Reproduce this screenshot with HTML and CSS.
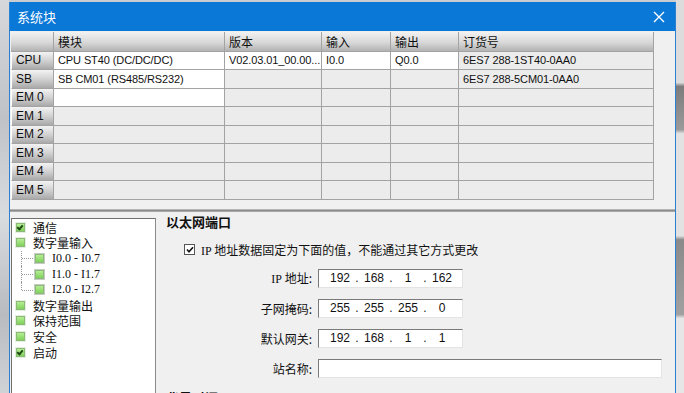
FILE: index.html
```html
<!DOCTYPE html>
<html lang="zh">
<head>
    <meta charset="UTF-8">
    <meta name="viewport" content="width=device-width, initial-scale=1.0">
    <title>系统块</title>
    <link rel="stylesheet" href="styles.css">
</head>
<body>
    <div class="screen">
        <div class="edge edge-left"></div>
        <div class="dialog">
            <div class="titlebar">
                <span>系统块</span>
                <svg class="close" width="12" height="12" viewBox="0 0 12 12"><path d="M1 1 L11 11 M11 1 L1 11" stroke="#fff" stroke-width="1.4" fill="none"/></svg>
            </div>

            <div class="grid-area">
                <div class="module-grid">
                    <div class="hd"></div>
                    <div class="hd">模块</div>
                    <div class="hd">版本</div>
                    <div class="hd">输入</div>
                    <div class="hd">输出</div>
                    <div class="hd">订货号</div>

                    <div class="lbl">CPU</div>
                    <div class="cell on">CPU ST40 (DC/DC/DC)</div>
                    <div class="cell on">V02.03.01_00.00...</div>
                    <div class="cell on">I0.0</div>
                    <div class="cell on">Q0.0</div>
                    <div class="cell">6ES7 288-1ST40-0AA0</div>

                    <div class="lbl">SB</div>
                    <div class="cell on">SB CM01 (RS485/RS232)</div>
                    <div class="cell"></div>
                    <div class="cell"></div>
                    <div class="cell"></div>
                    <div class="cell">6ES7 288-5CM01-0AA0</div>

                    <div class="lbl">EM 0</div>
                    <div class="cell on"></div>
                    <div class="cell"></div>
                    <div class="cell"></div>
                    <div class="cell"></div>
                    <div class="cell"></div>

                    <div class="lbl">EM 1</div>
                    <div class="cell"></div><div class="cell"></div><div class="cell"></div><div class="cell"></div><div class="cell"></div>
                    <div class="lbl">EM 2</div>
                    <div class="cell"></div><div class="cell"></div><div class="cell"></div><div class="cell"></div><div class="cell"></div>
                    <div class="lbl">EM 3</div>
                    <div class="cell"></div><div class="cell"></div><div class="cell"></div><div class="cell"></div><div class="cell"></div>
                    <div class="lbl">EM 4</div>
                    <div class="cell"></div><div class="cell"></div><div class="cell"></div><div class="cell"></div><div class="cell"></div>
                    <div class="lbl">EM 5</div>
                    <div class="cell"></div><div class="cell"></div><div class="cell"></div><div class="cell"></div><div class="cell"></div>
                </div>
            </div>

            <div class="splitter"></div>

            <div class="lower">
                <div class="tree">
                    <div class="node"><span class="box checked"></span>通信</div>
                    <div class="node"><span class="box"></span>数字量输入</div>
                    <div class="branch">
                        <div class="node sub"><span class="box"></span>I0.0 - I0.7</div>
                        <div class="node sub"><span class="box"></span>I1.0 - I1.7</div>
                        <div class="node sub last"><span class="box"></span>I2.0 - I2.7</div>
                    </div>
                    <div class="node"><span class="box"></span>数字量输出</div>
                    <div class="node"><span class="box"></span>保持范围</div>
                    <div class="node"><span class="box"></span>安全</div>
                    <div class="node"><span class="box checked"></span>启动</div>
                </div>

                <div class="props">
                    <div class="section">以太网端口</div>
                    <label class="fixed">
                        <span class="chk">
                            <svg width="8" height="8" viewBox="0 0 8 8"><path d="M1 3.5 L3 5.8 L7 1.2" stroke="#111" stroke-width="1.6" fill="none"/></svg>
                        </span>
                        <span><span class="latin">IP</span> 地址数据固定为下面的值，不能通过其它方式更改</span>
                    </label>

                    <div class="form">
                        <div class="name"><span class="latin">IP</span> 地址:</div>
                        <div class="ipbox">
                            <span class="oct">192</span><span class="dot">.</span><span class="oct">168</span><span class="dot">.</span><span class="oct">1</span><span class="dot">.</span><span class="oct">162</span>
                        </div>

                        <div class="name">子网掩码:</div>
                        <div class="ipbox">
                            <span class="oct">255</span><span class="dot">.</span><span class="oct">255</span><span class="dot">.</span><span class="oct">255</span><span class="dot">.</span><span class="oct">0</span>
                        </div>

                        <div class="name">默认网关:</div>
                        <div class="ipbox">
                            <span class="oct">192</span><span class="dot">.</span><span class="oct">168</span><span class="dot">.</span><span class="oct">1</span><span class="dot">.</span><span class="oct">1</span>
                        </div>

                        <div class="name">站名称:</div>
                        <div class="ipbox wide"></div>
                    </div>

                    <div class="section next">背景时间</div>
                </div>
            </div>
        </div>
        <div class="edge edge-right"></div>
    </div>
</body>
</html>
```

FILE: styles.css
```css
body {
    margin: 0;
    padding: 0;
    background: #c9ccd0;
    font-family: "Noto Sans CJK SC", "Liberation Sans", sans-serif;
    font-size: 12px;
    color: #111;
    overflow: hidden;
}

.screen {
    display: flex;
    width: 684px;
    height: 393px;
    overflow: hidden;
}

.edge-left {
    width: 9px;
    background: linear-gradient(#d6d8db, #bfc3c8 30%, #d9dcdf 55%, #b8bcc1 80%, #d0d3d6);
}
.edge-right {
    width: 8px;
    background: linear-gradient(#dcdcdc 0, #dcdcdc 21%, #7c7c7c 22%, #9a9a9a 33%, #e2e2e2 34%, #e2e2e2 60%, #8a8a8a 61%, #a0a0a0 80%, #e6e6e6 81%);
}

/* Dialog */
.dialog {
    width: 665px;
    margin-top: 2px;
    background: #f0f0f0;
    border-left: 1px solid #2b80d4;
    border-right: 1px solid #2b80d4;
    display: flex;
    flex-direction: column;
}

.titlebar {
    height: 29px;
    background: #0a78d7;
    color: #fff;
    font-size: 13px;
    display: flex;
    align-items: center;
    justify-content: space-between;
    padding: 0 10px 0 7px;
    flex-shrink: 0;
}
.titlebar span {
    margin-top: -1px;
}

/* Module table */
.grid-area {
    padding: 1px 0 0 1px;
}
.module-grid {
    display: grid;
    width: 643px;
    grid-template-columns: 43px 171px 97px 69px 68px 195px;
    grid-template-rows: 19.5px repeat(8, 18.5px);
    font-family: "Liberation Sans", "Noto Sans CJK SC", sans-serif;
    font-size: 11px;
}
.module-grid > div {
    box-sizing: border-box;
    border-right: 1px solid #a3a3a3;
    border-bottom: 1px solid #a3a3a3;
    padding-left: 4px;
    display: flex;
    align-items: center;
    white-space: nowrap;
    overflow: hidden;
    letter-spacing: -0.1px;
}
.hd {
    background: linear-gradient(#f2f2f2, #d8d8d8 55%, #b3b3b3);
    font-family: "Noto Sans CJK SC", sans-serif;
    font-size: 12px;
    padding-top: 1px;
}
.lbl {
    background: linear-gradient(#f3f3f3, #d2d2d2 50%, #a9a9a9);
    border-left: 1px solid #ffffff;
    font-size: 12px;
}
.cell {
    background: #ececec;
}
.cell.on {
    background: #fff;
}

.splitter {
    margin-top: 9px;
    height: 3px;
    background: linear-gradient(#c8c8c8, #8c8c8c, #b4b4b4);
    flex-shrink: 0;
}

/* Lower half */
.lower {
    display: flex;
    flex: 1;
    min-height: 0;
}

.tree {
    margin: 6px 0 0 1px;
    width: 145px;
    box-sizing: border-box;
    background: #fff;
    border-top: 1px solid #707070;
    border-left: 1px solid #707070;
    border-right: 1px solid #8a8a8a;
    padding: 1px 0 0 4px;
    font-size: 12px;
}
.node {
    height: 15.6px;
    display: flex;
    align-items: center;
    gap: 8px;
    white-space: nowrap;
}
.box {
    width: 7px;
    height: 7px;
    border: 1px solid #8cb87a;
    background: linear-gradient(#b5ee94, #7fd25a);
    box-shadow: 0 0 0 1px #e4efe0;
    position: relative;
    flex-shrink: 0;
}
.box.checked::after {
    content: "";
    position: absolute;
    left: 1px;
    top: 0;
    width: 2px;
    height: 4px;
    border: solid #1f4a14;
    border-width: 0 2px 2px 0;
    transform: rotate(40deg);
}

.branch {
    margin-left: 5px;
}
.node.sub {
    padding-left: 14px;
    position: relative;
    font-family: "Liberation Serif", serif;
    font-size: 12px;
    gap: 8px;
}
.node.sub .box {
    box-shadow: 0 0 0 1px #c7cbc5;
}
.node.sub::before {
    content: "";
    position: absolute;
    left: 0;
    top: 0;
    bottom: 0;
    border-left: 1px dotted #9a9a9a;
}
.node.sub.last::before {
    bottom: 50%;
}
.node.sub::after {
    content: "";
    position: absolute;
    left: 1px;
    top: 50%;
    width: 11px;
    border-top: 1px dotted #9a9a9a;
}

.props {
    flex: 1;
    padding: 1px 0 0 10px;
}
.section {
    font-weight: bold;
    font-size: 13px;
    height: 18px;
    line-height: 18px;
}
.section.next {
    margin-top: 11px;
}
.latin {
    font-family: "Liberation Serif", serif;
}

.fixed {
    display: flex;
    align-items: center;
    gap: 6px;
    margin: 11px 0 0 18px;
    height: 16px;
}
.chk {
    width: 9px;
    height: 9px;
    border: 1px solid #555;
    background: #fff;
    display: flex;
    align-items: center;
    justify-content: center;
}

.form {
    display: grid;
    grid-template-columns: 146px auto;
    column-gap: 6px;
    row-gap: 11px;
    margin-top: 11px;
    align-items: center;
}
.name {
    text-align: right;
    font-size: 12px;
}
.ipbox {
    width: 145px;
    height: 19px;
    box-sizing: border-box;
    background: #fff;
    border-top: 1px solid #7a7a7a;
    border-left: 1px solid #7a7a7a;
    border-right: 1px solid #e3e3e3;
    border-bottom: 1px solid #e3e3e3;
    display: flex;
    align-items: center;
    padding-left: 8px;
    font-family: "Liberation Sans", sans-serif;
    font-size: 12px;
}
.ipbox.wide {
    width: 344px;
}
.oct {
    width: 26px;
    text-align: center;
}
.dot {
    width: 8px;
    text-align: center;
}
```
